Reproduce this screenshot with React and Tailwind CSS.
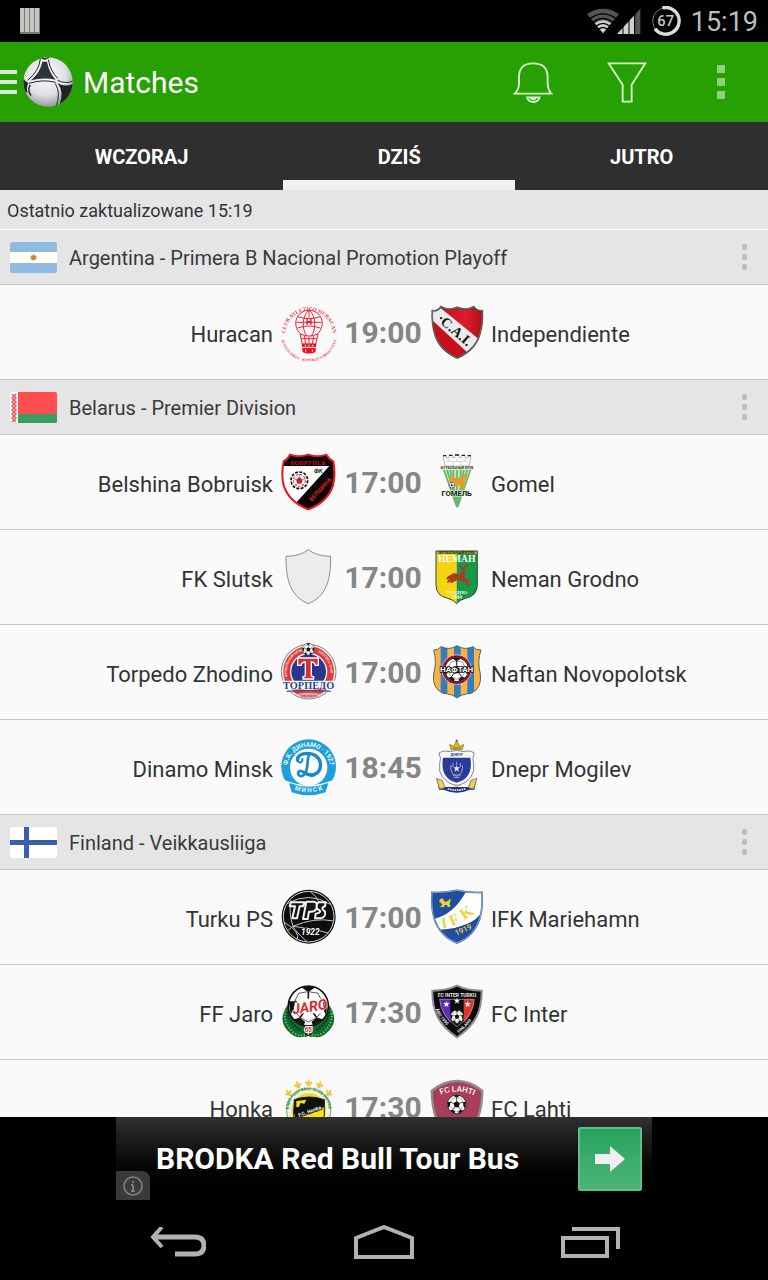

import { useState } from 'react'

/* ---------- Shared drawing pieces ---------- */

function Crest({ label, children }) {
  return (
    <svg viewBox="0 0 168 168" className="size-14 overflow-visible" role="img" aria-label={label} fontFamily="Roboto, sans-serif" fontWeight="700">
      {children}
    </svg>
  )
}

// Classic football: one pentagon in the middle, five patches on the rim
function Ball({ cx, cy, r }) {
  return (
    <g transform={`translate(${cx} ${cy}) scale(${r / 50})`}>
      <circle r="50" fill="#fff" stroke="#111" strokeWidth="4" />
      <path d="M0-18 17-6 11 15-11 15-17-6Z" fill="#111" />
      <path d="M0-18V-36M17-6 34-12M11 15 21 29M-11 15-21 29M-17-6-34-12" stroke="#111" strokeWidth="4" />
      <path d="M-17-46 0-35 17-46 0-50ZM34-12 49-12 44 22 36 6ZM21 29 37 34 12 49 8 40ZM-21 29-37 34-12 49-8 40ZM-34-12-49-12-44 22-36 6Z" fill="#111" />
      <path d="M0-36 24-32 34-12 38 8 21 29 0 40-21 29-38 8-34-12-24-32Z" fill="none" stroke="#333" strokeWidth="2" />
    </g>
  )
}

const STAR = 'M0-9 2-3 9-3 4 2 6 9 0 5-6 9-4 2-9-3-2-3Z'

/* ---------- Crests ---------- */

function Huracan() {
  return (
    <Crest label="Huracan">
      <path id="hur-top" d="M12 92A72 72 0 1 1 156 92" fill="none" />
      <path id="hur-low" d="M0 92A84 80 0 0 0 168 92" fill="none" />
      <g fill="#f4404c">
        <text fontSize="16" fontFamily="Liberation Serif, serif"><textPath href="#hur-top" startOffset="50%" textAnchor="middle">CLUB ATLETICO HURACAN</textPath></text>
        <text fontSize="11" fontFamily="Liberation Serif, serif"><textPath href="#hur-low" startOffset="50%" textAnchor="middle">BUENOS AIRES · REPUBLICA ARGENTINA</textPath></text>
      </g>
      <g fill="none" stroke="#ef2430" strokeWidth="3">
        <path d="M62 92C40 76 38 45 58 28Q84 8 110 28C130 45 128 76 106 92" />
        <path d="M84 18C62 36 62 76 78 98M84 18C106 36 106 76 90 98M84 18V40M46 55H122M50 38Q84 50 118 38M50 72Q84 60 118 72" />
        <path d="M57 90Q84 102 111 90L104 120H64ZM70 96 74 120M84 98V120M98 96 94 120M60 104H108" />
      </g>
      <path d="M62 119H106L103 145Q84 152 65 145Z" fill="#e8111f" />
      <path d="M64 130H104M73 122V127M84 122V127M95 122V127M74 136V143M94 136V143" stroke="#fff" strokeWidth="3" />
      <text x="84" y="64" fontSize="26" textAnchor="middle" fill="#e8111f">H</text>
    </Crest>
  )
}

function Independiente() {
  const d = 'M10 20Q26 22 36 8Q60 22 85 10Q110 22 134 8Q144 22 160 20Q162 60 152 92Q138 138 85 162Q32 138 18 92Q8 60 10 20Z'
  return (
    <Crest label="Independiente">
      <clipPath id="cai"><path d={d} /></clipPath>
      <linearGradient id="cai-red" x2="1" y2="0">
        <stop stopColor="#c20f1b" /><stop offset=".6" stopColor="#dd1c2c" /><stop offset="1" stopColor="#a90b18" />
      </linearGradient>
      <g clipPath="url(#cai)">
        <rect width="168" height="168" fill="url(#cai-red)" />
        <path d="M0 0H20L168 120V168H130L0 42Z" fill="#ecebeb" />
        <path d="M0 40 118 148 110 168H0Z" fill="#c8101d" />
        <path d="M26 0H168V116Z" fill="url(#cai-red)" />
      </g>
      <path d={d} fill="none" stroke="#38383a" strokeWidth="5" />
      <path d={d} fill="none" stroke="#aaa" strokeWidth="1.5" />
      <text transform="translate(22 48) rotate(41)" fill="#111" fontFamily="Liberation Serif, serif" fontSize="42">·C.A.I.</text>
    </Crest>
  )
}

function Belshina() {
  const d = 'M8 22Q22 14 27 2Q54 12 82 2Q110 12 136 2Q142 14 157 22Q164 62 156 94Q140 144 82 166Q24 144 8 94Q0 62 8 22Z'
  return (
    <Crest label="Belshina Bobruisk">
      <clipPath id="bel"><path d={d} /></clipPath>
      <g clipPath="url(#bel)">
        <rect width="168" height="168" fill="#fff" />
        <path d="M0 0H168V168H64L44 148 145 36H0Z" fill="#090506" />
      </g>
      <path d={d} fill="none" stroke="#f01420" strokeWidth="6" />
      <text x="82" y="32" fontSize="19" textAnchor="middle" fill="#c4141f" fontFamily="Liberation Serif, serif">БОБРУЙСК</text>
      <text x="112" y="56" fontSize="18" textAnchor="middle" fill="#111" fontStyle="italic">ФК</text>
      <text transform="translate(92 143) rotate(-47)" fontSize="18" fill="#e01e2a">БЕЛШИНА</text>
      <circle cx="55" cy="79" r="25" fill="#fff" stroke="#111" strokeWidth="5" strokeDasharray="9 4" />
      <circle cx="55" cy="79" r="18" fill="#fff" stroke="#d21e2b" strokeWidth="3" strokeDasharray="8 4" />
      <path d="M55 69 65 77 61 89H49L45 77Z" fill="#d21e2b" />
      <path d="M55 69V60M65 77 73 73M61 89 66 96M49 89 44 96M45 77 37 73" stroke="#d21e2b" strokeWidth="2" />
    </Crest>
  )
}

function Gomel() {
  return (
    <Crest label="Gomel">
      <path d="M42 6 50 4 52 12 60 11V4H70V11H78V3H90V11H98V4H108V11L116 12 118 4 126 6 120 36H48Z" fill="#fff" stroke="#999" strokeWidth="2" />
      <path d="M50 22H118M60 14V22M84 14V22M108 14V22M72 24V34M96 24V34" stroke="#bbb" strokeWidth="2" />
      <path d="M42 5H52M60 4H70M78 3H90M98 4H108M116 5H126" stroke="#222" strokeWidth="4" />
      <path d="M38 38H130L84 163Z" fill="#c4e6ba" />
      <path d="M42 40 84 160M52 40 84 150M62 40 84 150M73 40V130M84 40V158M95 40V130M106 40 86 150M117 40 88 140M127 40 86 158" stroke="#63b866" strokeWidth="5" />
      <rect x="36" y="36" width="96" height="11" fill="#f1f8ec" />
      <text x="84" y="45" fontSize="10" textAnchor="middle" fill="#152a12">ФУТБОЛЬНЫЙ КЛУБ</text>
      <path d="M60 74 70 64 78 72 96 72 104 58 114 66 108 80 102 104H94L92 94 76 96 74 106H66L68 88Z" fill="#e59a2c" />
      <Ball cx={68} cy={94} r={9} />
      <text x="83" y="125" fontSize="23" textAnchor="middle" fill="#101a10" stroke="#eaf6e6" strokeWidth="3" paintOrder="stroke">ГОМЕЛЬ</text>
    </Crest>
  )
}

function Slutsk() {
  return (
    <Crest label="FK Slutsk">
      <path d="M82 2Q56 22 15 22C14 92 28 142 82 164C136 142 150 92 149 22Q108 22 82 2Z" fill="#ececea" stroke="#77777a" strokeWidth="2.5" />
    </Crest>
  )
}

function Neman() {
  const d = 'M21 6H145V110Q144 140 110 148Q92 152 83 164Q74 152 56 148Q22 140 21 110Z'
  return (
    <Crest label="Neman Grodno">
      <clipPath id="nem"><path d={d} /></clipPath>
      <g clipPath="url(#nem)">
        <rect width="83" height="168" fill="#f5d413" />
        <rect x="83" width="85" height="168" fill="#16994a" />
        <rect y="4" width="168" height="11" fill="#a9b33c" />
      </g>
      <path d={d} fill="none" stroke="#2f4a2b" strokeWidth="3" />
      <text x="83" y="14" fontSize="11" textAnchor="middle" fill="#1a2a10">ФУТБОЛЬНЫЙ КЛУБ</text>
      <text x="83" y="40" fontSize="29" textAnchor="middle" fill="#fff" fontFamily="Liberation Serif, serif">НЕМАН</text>
      <path d="M54 84 74 72 92 76 100 64 96 58 104 56 112 62 106 72 108 86 118 94 124 112 116 108 106 98 84 94 68 102 56 96 64 90 52 92Z" fill="#a2401f" />
      <path d="M100 60Q90 54 92 46M104 58Q106 48 120 50M98 54 88 52M110 54 112 46M60 92 56 102M116 104V114" stroke="#a2401f" strokeWidth="4" fill="none" />
      <text x="83" y="134" fontSize="15" textAnchor="middle" fill="#f4f8df" fontFamily="Liberation Serif, serif">ГРОДНО</text>
      <text x="83" y="151" fontSize="14" textAnchor="middle" fill="#f4f8df">1964</text>
    </Crest>
  )
}

function Torpedo() {
  return (
    <Crest label="Torpedo Zhodino">
      <path id="tor-left" d="M19 96A65 65 0 0 1 62 22" fill="none" />
      <path id="tor-right" d="M104 22A65 65 0 0 1 147 96" fill="none" />
      <circle cx="83" cy="83" r="82" fill="#f3ecec" stroke="#8a7f8c" strokeWidth="3" />
      <circle cx="83" cy="83" r="66" fill="none" stroke="#dd3b3b" strokeWidth="20" />
      <circle cx="83" cy="83" r="52" fill="#29378c" />
      <g fill="#fbe3dd" fontSize="10">
        <text><textPath href="#tor-left" startOffset="50%" textAnchor="middle">ФУТБОЛЬНЫЙ КЛУБ</textPath></text>
        <text><textPath href="#tor-right" startOffset="50%" textAnchor="middle">FOOTBALL CLUB</textPath></text>
      </g>
      <path d="M50 42H112V64H103Q101 54 91 54V92Q91 98 98 98V105H66V98Q73 98 73 92V54Q62 54 60 64H50Z" fill="#d82f32" stroke="#fff" strokeWidth="4" />
      <path d="M0 110H166L160 140Q84 132 6 140Z" fill="#fafafa" />
      <text x="83" y="136" fontSize="31" textAnchor="middle" fill="#2d4482" fontFamily="Liberation Serif, serif">ТОРПЕДО</text>
      <path d="M16 142Q83 136 150 142" stroke="#3b4b82" strokeWidth="3" fill="none" />
      <path d="M46 150Q83 143 120 150Q102 163 83 163Q64 163 46 150Z" fill="#dda6a8" />
      <path d="M60 156H106" stroke="#c0464d" strokeWidth="4" strokeDasharray="5 2" />
      <Ball cx={82} cy={16} r={18} />
    </Crest>
  )
}

function Naftan() {
  const d = 'M14 18Q26 20 36 8Q62 20 84 5Q106 20 132 8Q142 20 156 18Q144 50 154 90Q160 132 126 148Q98 150 84 162Q70 150 42 148Q8 132 14 90Q24 50 14 18Z'
  return (
    <Crest label="Naftan Novopolotsk">
      <clipPath id="naf"><path d={d} /></clipPath>
      <g clipPath="url(#naf)">
        <rect width="168" height="168" fill="#f6b445" />
        <path d="M35 0H55V168H35ZM75 0H95V168H75ZM115 0H135V168H115Z" fill="#2d7fc0" />
      </g>
      <path d={d} fill="none" stroke="#59606c" strokeWidth="3" />
      <circle cx="83" cy="77" r="45" fill="#d2202d" stroke="#f4e4d4" strokeWidth="2" />
      <circle cx="83" cy="77" r="40" fill="none" stroke="#111" strokeWidth="3" strokeDasharray="6 4" />
      <Ball cx={83} cy={77} r={36} />
      <text x="83" y="85" fontSize="24" textAnchor="middle" fill="#fff" stroke="#111" strokeWidth="5" paintOrder="stroke">НАФТАН</text>
    </Crest>
  )
}

function DinamoMinsk() {
  return (
    <Crest label="Dinamo Minsk">
      <path id="din-top" d="M26 116A64 64 0 1 1 140 116" fill="none" />
      <path id="din-low" d="M30 148Q83 172 136 148" fill="none" />
      <circle cx="83" cy="83" r="82" fill="#1f9fda" />
      <circle cx="83" cy="85" r="56" fill="#fff" />
      <path d="M8 122Q83 154 158 122L144 162Q83 184 22 162Z" fill="#fafafa" />
      <path d="M24 132Q83 154 142 132L134 160Q83 178 32 160Z" fill="#1f9fda" />
      <g fill="#e7f7ff">
        <text fontSize="19"><textPath href="#din-top" startOffset="50%" textAnchor="middle">Ф.К. ДИНАМО · 1927</textPath></text>
        <text fontSize="19"><textPath href="#din-low" startOffset="50%" textAnchor="middle">М И Н С К</textPath></text>
      </g>
      <g fill="none" stroke="#1789c4" strokeWidth="10" strokeLinecap="round">
        <path d="M50 64C44 38 112 32 118 72C122 106 92 114 70 102" />
        <path d="M86 44C74 64 86 92 68 108C56 118 44 102 56 96C70 92 82 118 100 108" strokeWidth="8" />
        <path d="M50 64C54 76 66 70 64 60" strokeWidth="6" />
      </g>
    </Crest>
  )
}

function Dnepr() {
  return (
    <Crest label="Dnepr Mogilev">
      <path d="M66 32 62 16 74 22 80 10 83 3 86 10 92 22 104 16 100 32Z" fill="#d9b431" stroke="#8a701a" strokeWidth="2" />
      <path d="M83 1V10M79 5H87M72 27H96" stroke="#6e5a14" strokeWidth="2" />
      <path d="M24 120 40 126 46 144 118 144 126 126 142 120 136 152 122 152Q83 170 44 152L30 152Z" fill="#24307b" />
      <path d="M22 118 40 124 48 146 32 150ZM144 118 126 124 118 146 134 150Z" fill="#e9d249" stroke="#5a5f6d" strokeWidth="2" />
      <path d="M30 42Q40 36 46 36Q64 40 83 34Q102 40 120 36Q126 36 136 42Q128 58 134 74Q142 122 83 142Q24 122 32 74Q38 58 30 42Z" fill="#f7f7fa" stroke="#7d86ad" strokeWidth="3" />
      <path d="M42 56H124Q134 118 83 131Q32 118 42 56Z" fill="#2b3a94" />
      <text x="83" y="50" fontSize="11" textAnchor="middle" fill="#2b3a94">ДНЕПР</text>
      <path d={STAR} transform="translate(83 88) scale(1.1)" fill="#e4e8fa" />
      <path d="M66 78Q62 104 83 112Q104 104 100 78M72 72V84M94 72V84M83 68V78M70 108H96M74 115H92" fill="none" stroke="#9aa7e0" strokeWidth="3" />
      <path d="M56 149Q83 158 110 149" stroke="#dfe3f5" strokeWidth="5" strokeDasharray="5 2" fill="none" />
      <path d="M72 138H94" stroke="#d9b431" strokeWidth="4" />
    </Crest>
  )
}

function Turku() {
  return (
    <Crest label="Turku PS">
      <circle cx="83" cy="83" r="81" fill="#0d0d0d" />
      <circle cx="83" cy="83" r="76" fill="none" stroke="#d9d9d9" strokeWidth="3" />
      <path d="M18 44Q84 6 148 46M10 100Q60 130 48 152M36 112Q100 84 158 96M36 112Q90 116 142 132M36 112Q22 70 30 34M36 112 18 126M36 112Q44 128 78 158M88 8Q104 18 118 46" fill="none" stroke="#c4c4c4" strokeWidth="3" />
      <path d="M30 40H70L66 52H56L48 88H34L42 52H26ZM76 38H100Q112 42 106 60Q100 70 84 68L80 90H66ZM134 40H112Q100 52 112 62Q126 70 104 74L102 88H118Q136 84 132 68Q116 56 132 52Z" fill="#161616" stroke="#f4f4f4" strokeWidth="6" strokeLinejoin="round" />
      <text x="88" y="138" fontSize="25" textAnchor="middle" fill="#fff" fontStyle="italic" stroke="#0d0d0d" strokeWidth="4" paintOrder="stroke">1922</text>
    </Crest>
  )
}

function Mariehamn() {
  const d = 'M9 10Q50 12 84 4Q118 12 159 10Q162 56 152 90Q134 142 84 162Q34 142 16 90Q6 56 9 10Z'
  return (
    <Crest label="IFK Mariehamn">
      <clipPath id="ifk"><path d={d} /></clipPath>
      <g clipPath="url(#ifk)">
        <rect width="168" height="168" fill="#1f4f9e" />
        <path d="M0 92Q76 84 118 -6L168 0V78Q114 110 36 130Z" fill="#fff" />
        <path d="M164 62Q132 118 32 122L60 166 168 166Z" fill="#1f4f9e" />
      </g>
      <path d={d} fill="none" stroke="#2a58a8" strokeWidth="5" />
      <path d={d} fill="none" stroke="#e9eef8" strokeWidth="1.5" />
      <path d="M34 30 42 28 46 38 58 36 60 30 66 32 62 44 64 54H56L54 48 46 48 46 54H32L40 48 36 42 30 38Z" fill="#f0d228" />
      <g fill="#f3d03a">
        <text transform="translate(40 118) rotate(-10)" fontSize="44" fontFamily="Liberation Serif, serif">I</text>
        <text transform="translate(68 112) rotate(-22)" fontSize="46" fontFamily="Liberation Serif, serif">F</text>
        <text transform="translate(106 94) rotate(-34)" fontSize="48" fontFamily="Liberation Serif, serif">K</text>
        <text transform="translate(82 140) rotate(-24)" fontSize="23" fontWeight="500">1919</text>
      </g>
    </Crest>
  )
}

function Jaro() {
  return (
    <Crest label="FF Jaro">
      <path d="M22 60Q-12 106 20 140Q50 172 80 152L82 132Q30 112 22 60ZM142 60Q176 106 144 140Q114 172 84 152L82 132Q134 112 142 60Z" fill="#0f6b2c" />
      <path d="M12 78Q6 120 40 148Q62 160 76 148M152 78Q158 120 124 148Q102 160 88 148" fill="none" stroke="#5fc06e" strokeWidth="6" strokeDasharray="4 5" />
      <path d="M20 84Q24 118 60 140M144 84Q140 118 104 140" fill="none" stroke="#052f12" strokeWidth="6" strokeDasharray="5 4" />
      <Ball cx={82} cy={66} r={60} />
      <path d="M48 44H126L128 88H44Z" fill="#fff" />
      <text transform="translate(36 91) rotate(-9)" fontSize="43" fontStyle="italic" fill="#e1262d" stroke="#fff" strokeWidth="3" paintOrder="stroke">JARO</text>
      <text x="82" y="143" fontSize="19" textAnchor="middle" fill="#e1262d" stroke="#fff" strokeWidth="6" paintOrder="stroke">65</text>
      <path d="M72 158 92 150M92 158 72 150" stroke="#111" strokeWidth="3" />
    </Crest>
  )
}

function Inter() {
  const d = 'M10 20Q54 20 84 5Q114 20 158 20C158 80 142 120 84 160C26 120 10 80 10 20Z'
  return (
    <Crest label="FC Inter">
      <path id="int-l" d="M20 76Q34 112 80 148" fill="none" />
      <path id="int-r" d="M90 148Q132 112 150 70" fill="none" />
      <path d={d} fill="#0b0b0d" stroke="#8c8c90" strokeWidth="6" />
      <path d="M32 46H64V116Q36 92 32 46Z" fill="#5a2fb6" />
      <path d="M104 46H136Q132 92 104 116Z" fill="#e2332f" />
      <path d="M32 46H136Q132 96 84 128Q36 96 32 46Z" fill="none" stroke="#b5b5b8" strokeWidth="2" />
      <path d={STAR} transform="translate(52 60)" fill="#fff" />
      <path d={STAR} transform="translate(84 50)" fill="#fff" />
      <path d={STAR} transform="translate(116 60)" fill="#fff" />
      <g fill="#e6e6e8" fontSize="15">
        <text x="84" y="39" textAnchor="middle">FC INTER TURKU</text>
        <text fontSize="13"><textPath href="#int-l">ÅBO 1990</textPath></text>
        <text fontSize="13"><textPath href="#int-r">FINLAND</textPath></text>
      </g>
      <Ball cx={84} cy={98} r={20} />
    </Crest>
  )
}

function Honka() {
  const fleur = 'M0-13Q5-6 3-1Q10-8 11 0Q10 5 4 4L6 10H-6L-4 4Q-10 5-11 0Q-10-8-3-1Q-5-6 0-13Z'
  return (
    <Crest label="Honka">
      <path id="hon-top" d="M26 112A60 60 0 1 1 140 112" fill="none" />
      <g fill="#efc63e">
        <path d={fleur} transform="translate(83 12)" />
        <path d={fleur} transform="translate(50 18) rotate(-16)" />
        <path d={fleur} transform="translate(116 18) rotate(16)" />
        <path d={fleur} transform="translate(22 42) rotate(-38)" />
        <path d={fleur} transform="translate(144 42) rotate(38)" />
      </g>
      <circle cx="83" cy="94" r="66" fill="#f2dc2a" stroke="#7cb98e" strokeWidth="4" />
      <circle cx="83" cy="94" r="58" fill="none" stroke="#eef4dc" strokeWidth="12" />
      <text fontSize="13" fill="#2f8a54"><textPath href="#hon-top" startOffset="50%" textAnchor="middle">ESBO FOOTBALL CLUB HONKA</textPath></text>
      <path d="M40 62Q83 46 130 62V110Q120 136 84 150Q46 136 38 110Z" fill="#f6de1c" stroke="#1a1a1a" strokeWidth="3" />
      <path d="M40 62Q83 46 130 62V84L44 118 38 100Z" fill="#111" />
      <path d="M46 66 76 62 70 74 58 72 54 84H46Z" fill="#f6de1c" />
      <text transform="translate(54 114) rotate(-20)" fontSize="15" fill="#fff" stroke="#111" strokeWidth="5" paintOrder="stroke">F.C. Honka</text>
    </Crest>
  )
}

function Lahti() {
  return (
    <Crest label="FC Lahti">
      <path id="lah-arc" d="M26 52Q84 22 144 54" fill="none" />
      <path d="M8 36Q44 6 84 6Q124 6 160 36Q158 104 138 132Q112 158 84 162Q56 158 30 132Q10 104 8 36Z" fill="#a93d5c" stroke="#8e8c90" strokeWidth="7" />
      <text fontSize="24" fill="#fff" fontWeight="500"><textPath href="#lah-arc" startOffset="50%" textAnchor="middle">FC LAHTI</textPath></text>
      <Ball cx={83} cy={76} r={28} />
    </Crest>
  )
}

/* ---------- Flags ---------- */

function Flag({ country }) {
  return (
    <svg viewBox="0 0 47 31" className="h-[31px] w-[47px] shrink-0 rounded-xs" role="img" aria-label={country}>
      {country === 'Argentina' && (
        <>
          <rect width="47" height="31" fill="#fff" />
          <path d="M0 0H47V10H0ZM0 21H47V31H0Z" fill="#8fbbe3" />
          <circle cx="23.5" cy="15.5" r="2.6" fill="#c58a3c" />
          <circle cx="23.5" cy="15.5" r="3.2" fill="none" stroke="#e0b273" strokeDasharray="1 1" />
        </>
      )}
      {country === 'Belarus' && (
        <>
          <rect width="47" height="31" fill="#ff4f50" />
          <rect y="22" width="47" height="9" fill="#3b9b63" />
          <rect width="8" height="31" fill="#fff" />
          <path d="M2 2 6 6 2 10 6 14 2 18 6 22 2 26 6 30M6 2 2 6 6 10 2 14 6 18 2 22 6 26 2 30" fill="none" stroke="#ec5560" strokeWidth="1.5" />
        </>
      )}
      {country === 'Finland' && (
        <>
          <rect width="47" height="31" fill="#fff" />
          <path d="M0 13H47V18H0ZM14 0H19V31H14Z" fill="#3c5fa8" />
        </>
      )}
    </svg>
  )
}

/* ---------- Data ---------- */

const TABS = ['WCZORAJ', 'DZIŚ', 'JUTRO']

const GROUPS = [
  {
    country: 'Argentina',
    league: 'Primera B Nacional Promotion Playoff',
    matches: [{ home: 'Huracan', away: 'Independiente', time: '19:00', HomeCrest: Huracan, AwayCrest: Independiente }],
  },
  {
    country: 'Belarus',
    league: 'Premier Division',
    matches: [
      { home: 'Belshina Bobruisk', away: 'Gomel', time: '17:00', HomeCrest: Belshina, AwayCrest: Gomel },
      { home: 'FK Slutsk', away: 'Neman Grodno', time: '17:00', HomeCrest: Slutsk, AwayCrest: Neman },
      { home: 'Torpedo Zhodino', away: 'Naftan Novopolotsk', time: '17:00', HomeCrest: Torpedo, AwayCrest: Naftan },
      { home: 'Dinamo Minsk', away: 'Dnepr Mogilev', time: '18:45', HomeCrest: DinamoMinsk, AwayCrest: Dnepr },
    ],
  },
  {
    country: 'Finland',
    league: 'Veikkausliiga',
    matches: [
      { home: 'Turku PS', away: 'IFK Mariehamn', time: '17:00', HomeCrest: Turku, AwayCrest: Mariehamn },
      { home: 'FF Jaro', away: 'FC Inter', time: '17:30', HomeCrest: Jaro, AwayCrest: Inter },
      { home: 'Honka', away: 'FC Lahti', time: '17:30', HomeCrest: Honka, AwayCrest: Lahti },
    ],
  },
]

/* ---------- Page sections ---------- */

function StatusBar() {
  return (
    <div className="flex h-[42px] shrink-0 items-center bg-black px-2.5 text-[#bdbdbd]">
      <svg viewBox="0 0 20 26" className="ml-2.5 h-[26px] w-5" aria-hidden="true">
        <path d="M0 0H20V26H0Z" fill="#77776f" />
        <path d="M0 0H4V24H0ZM5 0H9V24H5ZM10 0H14V24H10ZM15 0H19V24H15Z" fill="#c4c4c0" />
      </svg>
      <div className="ml-auto flex items-center">
        <svg viewBox="0 0 96 78" className="h-[26px] w-8" aria-hidden="true">
          <path d="M48 76 0 18Q48-14 96 18Z" fill="#555" />
          <path d="M48 76 24 46Q48 28 72 46Z" fill="#d0d0d0" />
          <path d="M10 31Q48 4 86 31M19 42Q48 20 77 42M28 54Q48 38 68 54M36 63Q48 54 60 63" fill="none" stroke="#000" strokeWidth="4" />
        </svg>
        <svg viewBox="0 0 72 78" className="-ml-0.5 h-[26px] w-6" aria-hidden="true">
          <path d="M0 78 52 22V78Z" fill="#cfcfcf" />
          <path d="M54 20 70 2V78H54Z" fill="#555" />
          <path d="M18 50V78M36 34V78M53 10V78" stroke="#000" strokeWidth="3" />
        </svg>
        <svg viewBox="0 0 90 90" className="ml-2.5 size-[30px]" role="img" aria-label="67%">
          <circle cx="45" cy="45" r="40" fill="none" stroke="#777" strokeWidth="3" />
          <path d="M34 6A40 40 0 1 1 12 68" fill="none" stroke="#dcdcdc" strokeWidth="10" />
          <text x="44" y="60" textAnchor="middle" fontSize="44" fontWeight="500" fill="#c8c8c8" fontFamily="Roboto, sans-serif">67</text>
        </svg>
        <span className="ml-2.5 pt-0.5 text-[27px] leading-none">15:19</span>
      </div>
    </div>
  )
}

function ActionBar() {
  return (
    <header className="flex h-20 shrink-0 items-center bg-[#26a003] text-white">
      <button type="button" aria-label="Menu" className="flex items-center gap-1.5">
        <span className="flex flex-col gap-1.5">
          <span className="block h-1 w-[17px] bg-[#d4ecd0]" />
          <span className="block h-1 w-[17px] bg-[#d4ecd0]" />
          <span className="block h-1 w-[17px] bg-[#d4ecd0]" />
        </span>
        <svg viewBox="0 0 150 150" className="size-[50px]" aria-hidden="true">
          <radialGradient id="ball-shade" cx=".45" cy=".35" r=".7">
            <stop stopColor="#fff" /><stop offset=".6" stopColor="#dfdfe3" /><stop offset="1" stopColor="#8a8d94" />
          </radialGradient>
          <clipPath id="ball-clip"><circle cx="75" cy="75" r="74" /></clipPath>
          <circle cx="75" cy="75" r="74" fill="url(#ball-shade)" />
          <g clipPath="url(#ball-clip)">
            <path d="M58 14Q52 46 24 70Q60 60 98 68Q78 46 72 14Z" fill="#2c3638" />
            <path d="M52 6Q48 42 14 70M76 8Q82 42 104 64M18 79Q58 66 98 76" fill="none" stroke="#22282a" strokeWidth="3" />
            <path d="M104 78Q124 92 150 80V106Q136 130 110 142Q124 106 104 78Z" fill="#1d2326" />
            <path d="M97 80Q114 108 100 146M104 70Q128 82 150 72" fill="none" stroke="#22282a" strokeWidth="3" />
            <path d="M0 62Q6 74 16 78Q8 92 14 108L0 100Z" fill="#20262a" />
            <path d="M22 84Q12 98 24 116M52 2 66 6 80 0" fill="none" stroke="#22282a" strokeWidth="4" />
          </g>
        </svg>
      </button>
      <h1 className="ml-2.5 pt-0.5 text-3xl">Matches</h1>
      <div className="ml-auto flex">
        <button type="button" aria-label="Notifications" className="grid h-20 w-[94px] place-items-center">
          <svg viewBox="0 0 120 123" className="h-[41px] w-10" fill="none" stroke="#d9f5cf" strokeWidth="5.5" aria-hidden="true">
            <path d="M5 95Q19 82 18 60V46Q18 4 60 4Q104 4 104 46V60Q103 82 115 95Z" />
            <path d="M42 106H80Q76 120 61 120Q46 120 42 106ZM52 106Q54 112 61 112Q68 112 70 106" />
          </svg>
        </button>
        <button type="button" aria-label="Filter" className="grid h-20 w-[94px] place-items-center">
          <svg viewBox="0 0 120 123" className="h-[41px] w-10" fill="none" stroke="#d9f5cf" strokeWidth="5.5" aria-hidden="true">
            <path d="M5 4H115L74 68V119H47V68Z" />
          </svg>
        </button>
        <button type="button" aria-label="More options" className="flex h-20 w-[94px] flex-col items-center justify-center gap-[5px]">
          <span className="size-2 bg-[#8fd07f]" />
          <span className="size-2 bg-[#8fd07f]" />
          <span className="size-2 bg-[#8fd07f]" />
        </button>
      </div>
    </header>
  )
}

function DayTabs() {
  const [active, setActive] = useState('DZIŚ')

  return (
    <nav className="flex h-[68px] shrink-0 bg-[#2f2f2f] font-bold text-white">
      {TABS.map((tab) => (
        <button
          key={tab}
          type="button"
          onClick={() => setActive(tab)}
          className={`flex-auto border-b-10 pt-3 text-xl leading-6 ${active === tab ? 'border-[#f0f0f0]' : 'border-transparent'}`}
        >
          {tab}
        </button>
      ))}
    </nav>
  )
}

function MatchRow({ home, away, time, HomeCrest, AwayCrest }) {
  return (
    <li className="grid h-[95px] grid-cols-[1fr_56px_92px_56px_1fr] items-center border-b border-[#c6c6c6] bg-[#fafafa] pr-0.5 text-[22px] text-[#333]">
      <span className="truncate pt-1 pr-2 text-right">{home}</span>
      <HomeCrest />
      <time className="pt-0.5 text-center text-3xl font-bold text-[#868686]">{time}</time>
      <AwayCrest />
      <span className="truncate pt-1 pl-1.5">{away}</span>
    </li>
  )
}

function Group({ country, league, matches }) {
  return (
    <section>
      <div className="flex h-[55px] items-center border-b border-[#c6c6c6] bg-[#e5e5e5] pl-2.5">
        <Flag country={country} />
        <h2 className="ml-3 flex-1 truncate pt-0.5 text-xl text-[#3a3a3a]">{country} - {league}</h2>
        <button type="button" aria-label={`${country} options`} className="flex h-full w-12 flex-col items-center justify-center gap-1">
          <span className="h-1.5 w-[5px] rounded-xs bg-[#bdbdbd]" />
          <span className="h-1.5 w-[5px] rounded-xs bg-[#bdbdbd]" />
          <span className="h-1.5 w-[5px] rounded-xs bg-[#bdbdbd]" />
        </button>
      </div>
      <ul>
        {matches.map((match) => (
          <MatchRow key={match.home} {...match} />
        ))}
      </ul>
    </section>
  )
}

function AdBanner() {
  return (
    <aside className="flex h-[83px] shrink-0 justify-center bg-black">
      <a href="#ad" className="relative flex w-[536px] items-center justify-between bg-linear-to-b from-[#303030] to-black pr-2.5 pl-10 text-white">
        <span className="text-3xl font-bold">BRODKA Red Bull Tour Bus</span>
        <span className="grid size-16 place-items-center rounded-xs border-2 border-[#63bd8b] bg-linear-to-b from-[#25a45c] to-[#4bb47a]">
          <svg viewBox="0 0 30 26" className="h-[26px] w-[30px]" aria-hidden="true">
            <path d="M0 8H15V0L30 13 15 26V18H0Z" fill="#f0f0f0" />
          </svg>
        </span>
        <span className="absolute bottom-0 left-0 grid h-[29px] w-[34px] place-items-center rounded-tr-lg bg-[#3a3a3a]">
          <svg viewBox="0 0 20 20" className="size-5" fill="none" stroke="#808080" strokeWidth="1.5" aria-hidden="true">
            <circle cx="10" cy="10" r="9" />
            <path d="M10 9V15M10 5V7M8 9H10M8 15H12" strokeWidth="2" />
          </svg>
        </span>
      </a>
    </aside>
  )
}

function SystemNav() {
  return (
    <nav className="flex h-20 shrink-0 items-center justify-center bg-black pt-1">
      <button type="button" aria-label="Back" className="grid h-full w-[206px] place-items-center">
        <svg viewBox="0 0 56 30" className="h-[30px] w-14" fill="none" stroke="#b2b2b2" aria-hidden="true">
          <path d="M4 10H45Q54 10 54 18.5Q54 27 45 27H25" strokeWidth="5" />
          <path d="M12 0 3 10 12 20" strokeWidth="4" />
        </svg>
      </button>
      <button type="button" aria-label="Home" className="grid h-full w-[206px] place-items-center">
        <svg viewBox="0 0 60 34" className="h-[34px] w-[60px]" fill="none" stroke="#b2b2b2" strokeWidth="4" aria-hidden="true">
          <path d="M2 32V13L30 2 58 13V32Z" />
        </svg>
      </button>
      <button type="button" aria-label="Recent apps" className="grid h-full w-[206px] place-items-center">
        <svg viewBox="0 0 59 31" className="h-[31px] w-[59px]" fill="none" stroke="#b2b2b2" strokeWidth="4" aria-hidden="true">
          <path d="M2 11H46V29H2ZM11 2H57V22" />
        </svg>
      </button>
    </nav>
  )
}

export default function App() {
  return (
    <div className="flex h-screen flex-col overflow-hidden bg-black font-[Roboto,sans-serif]">
      <StatusBar />
      <ActionBar />
      <DayTabs />
      <main className="min-h-0 flex-1 overflow-hidden bg-[#fafafa]">
        <p className="h-10 border-b border-white bg-[#e5e5e5] px-[7px] pt-[9px] text-lg leading-6 text-[#333]">
          Ostatnio zaktualizowane 15:19
        </p>
        {GROUPS.map((group) => (
          <Group key={group.country} {...group} />
        ))}
      </main>
      <AdBanner />
      <SystemNav />
    </div>
  )
}
